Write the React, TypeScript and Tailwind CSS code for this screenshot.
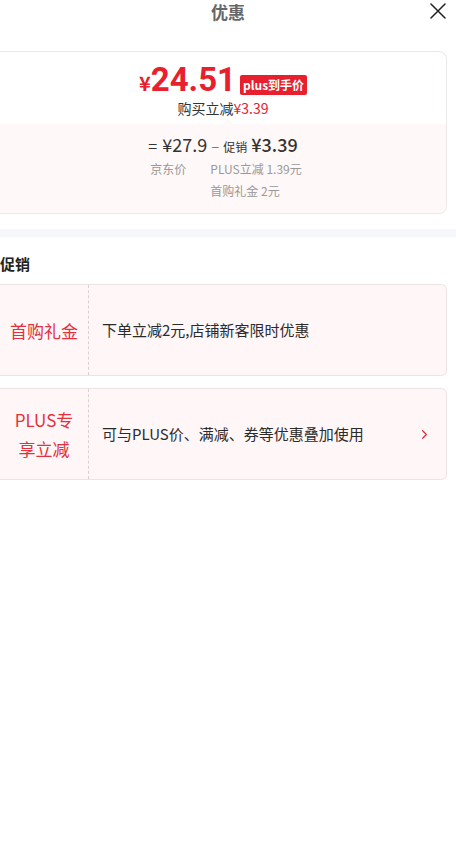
import { ChevronRight } from 'lucide-react';

const font = { fontFamily: '"Noto Sans CJK SC", "Noto Sans", sans-serif' };

function PromoCard({ label, text, arrow }: { label: React.ReactNode; text: string; arrow?: boolean }) {
  return (
    <div className="flex h-[92px] w-[447px] rounded-r-[6px] border border-l-0 border-[#eee3e4] bg-[#fff6f7]">
      <div className="flex w-[89px] shrink-0 items-center justify-center border-r border-dashed border-[#dccfd0] text-center text-[17px] leading-[29px] text-[#e3303c]">
        {label}
      </div>
      <div className="flex flex-1 items-center pl-[13px] pr-[14px] text-[15px] text-[#2b2b2b]">
        <span className="flex-1">{text}</span>
        {arrow && <ChevronRight className="h-[15px] w-[15px] text-[#e3303c]" strokeWidth={2} />}
      </div>
    </div>
  );
}

export default function App() {
  return (
    <div className="min-h-[853px] w-[456px] bg-white" style={font}>
      {/* Header */}
      <div className="relative flex h-[24px] items-center justify-center">
        <span className="text-[17px] font-bold leading-[22px] text-[#666]">优惠</span>
        <svg className="absolute right-[10px] top-[3px]" width="16" height="16" viewBox="0 0 16 16">
          <path d="M1 1L15 15M15 1L1 15" stroke="#222" strokeWidth="1.5" strokeLinecap="round" />
        </svg>
      </div>

      {/* Price card */}
      <div className="mt-[27px] w-[447px] overflow-hidden rounded-r-[8px] border border-l-0 border-[#ece8e8]">
        <div className="flex h-[72px] flex-col items-center pt-[11px]">
          <div className="flex items-end text-[#e8202e]">
            <span className="mb-[3px] text-[20px] font-bold leading-none">¥</span>
            <span className="text-[33px] font-bold leading-none" style={{ fontFamily: 'Roboto, "Noto Sans", sans-serif' }}>24.51</span>
            <span className="mb-[1px] ml-[4px] rounded-[2px] bg-[#e8202e] px-[3px] text-[12px] font-bold leading-[20px] text-white">plus到手价</span>
          </div>
          <div className="mt-[3px] text-[14px] leading-[18px] text-[#333]">
            购买立减<span className="text-[#e8202e]">¥3.39</span>
          </div>
        </div>
        <div className="relative flex h-[89px] flex-col items-center bg-[#fff8f8] pt-[7px]">
          <div className="absolute left-[224px] top-[-4px] h-[8px] w-[8px] rotate-45 bg-[#fff8f8]" />
          <div className="flex items-baseline text-[#333]">
            <span className="text-[16px]">=</span>
            <span className="ml-[5px] text-[18px]">¥27.9</span>
            <span className="ml-[4px] text-[15px] text-[#777]">–</span>
            <span className="ml-[4px] text-[12px]">促销</span>
            <span className="ml-[4px] text-[18px] font-medium">¥3.39</span>
          </div>
          <div className="ml-[6px] flex text-[12px] leading-[22px] text-[#999]">
            <span className="w-[60px]">京东价</span>
            <div className="flex flex-col">
              <span>PLUS立减 1.39元</span>
              <span>首购礼金 2元</span>
            </div>
          </div>
        </div>
      </div>

      <div className="mt-[15px] h-[8px] bg-[#f5f7fb]" />

      <div className="mt-[17px] text-[15px] font-bold leading-[20px] text-[#222]">促销</div>

      <div className="mt-[10px] flex flex-col gap-[12px]">
        <PromoCard label="首购礼金" text="下单立减2元,店铺新客限时优惠" />
        <PromoCard
          label={
            <span>
              PLUS专
              <br />
              享立减
            </span>
          }
          text="可与PLUS价、满减、券等优惠叠加使用"
          arrow
        />
      </div>
    </div>
  );
}
